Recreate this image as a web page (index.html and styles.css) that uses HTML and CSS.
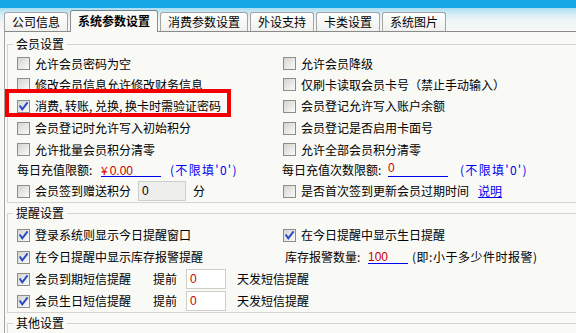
FILE: index.html
```html
<!DOCTYPE html>
<html lang="zh-CN">
<head>
<meta charset="utf-8">
<title>系统参数设置</title>
<link rel="stylesheet" href="styles.css">
</head>
<body>
<div class="topbar"></div>
<div class="tabstrip">
  <div class="tab">公司信息</div>
  <div class="tab active">系统参数设置</div>
  <div class="tab">消费参数设置</div>
  <div class="tab">外设支持</div>
  <div class="tab">卡类设置</div>
  <div class="tab">系统图片</div>
</div>
<div class="panel">
  <fieldset class="group g1">
    <legend>会员设置</legend>
    <div class="grid">
      <div class="cell"><span class="box"></span>允许会员密码为空</div>
      <div class="cell"><span class="box"></span>允许会员降级</div>

      <div class="cell"><span class="box"></span>修改会员信息允许修改财务信息</div>
      <div class="cell"><span class="box"></span>仅刷卡读取会员卡号（禁止手动输入）</div>

      <div class="cell hl"><span class="box"><svg class="tick" viewBox="0 0 11 11"><path d="M2.2 5.2 L4.3 8.3 L9 2.2"/></svg></span><span>消费, 转账, 兑换, 换卡时需验证密码</span></div>
      <div class="cell"><span class="box"></span>会员登记允许写入账户余额</div>

      <div class="cell"><span class="box"></span>会员登记时允许写入初始积分</div>
      <div class="cell"><span class="box"></span>会员登记是否启用卡面号</div>

      <div class="cell"><span class="box"></span>允许批量会员积分清零</div>
      <div class="cell"><span class="box"></span>允许全部会员积分清零</div>

      <div class="cell"><span class="lbl w84">每日充值限额:</span><span class="uline w60"><span class="yen">¥</span>0.00</span><span class="hint ml9">(不限填'0')</span></div>
      <div class="cell shift"><span class="lbl w106">每日充值次数限额:</span><span class="uline w60 raised">0</span><span class="hint ml12">(不限填'0')</span></div>

      <div class="cell"><span class="lbl w121"><span class="box"></span>会员签到赠送积分</span><span class="tbox gray w48">0</span><span class="ml7">分</span></div>
      <div class="cell"><span class="lbl w195"><span class="box"></span>是否首次签到更新会员过期时间</span><span class="link">说明</span></div>
    </div>
  </fieldset>

  <fieldset class="group g2">
    <legend>提醒设置</legend>
    <div class="grid">
      <div class="cell"><span class="box"><svg class="tick" viewBox="0 0 11 11"><path d="M2.2 5.2 L4.3 8.3 L9 2.2"/></svg></span>登录系统则显示今日提醒窗口</div>
      <div class="cell"><span class="box"><svg class="tick" viewBox="0 0 11 11"><path d="M2.2 5.2 L4.3 8.3 L9 2.2"/></svg></span>在今日提醒中显示生日提醒</div>

      <div class="cell"><span class="box"><svg class="tick" viewBox="0 0 11 11"><path d="M2.2 5.2 L4.3 8.3 L9 2.2"/></svg></span>在今日提醒中显示库存报警提醒</div>
      <div class="cell inset"><span class="lbl w83">库存报警数量:</span><span class="uline w40">100</span><span class="ml4 spaced">(即:小于多少件时报警)</span></div>

      <div class="cell span"><span class="lbl w136"><span class="box"><svg class="tick" viewBox="0 0 11 11"><path d="M2.2 5.2 L4.3 8.3 L9 2.2"/></svg></span>会员到期短信提醒</span><span class="lbl w33">提前</span><span class="tbox w40 red">0</span><span class="ml11">天发短信提醒</span></div>

      <div class="cell span"><span class="lbl w136"><span class="box"><svg class="tick" viewBox="0 0 11 11"><path d="M2.2 5.2 L4.3 8.3 L9 2.2"/></svg></span>会员生日短信提醒</span><span class="lbl w33">提前</span><span class="tbox w40 red">0</span><span class="ml11">天发短信提醒</span></div>
    </div>
  </fieldset>

  <fieldset class="group g3">
    <legend>其他设置</legend>
    <div class="filler"></div>
  </fieldset>
</div>
</body>
</html>
```

FILE: styles.css
```css
html, body {
  margin: 0;
  padding: 0;
}
html {
  overflow: hidden;
}
body {
  width: 576px;
  height: 333px;
  overflow: hidden;
  background: #f9f9f6;
  font-family: "Noto Sans CJK SC", "Noto Sans", sans-serif;
  font-size: 12px;
  line-height: 14px;
  color: #000;
}

.topbar {
  height: 8px;
  background: #16a8e6;
}

.tabstrip {
  height: 23px;
  display: flex;
  align-items: flex-end;
  gap: 2px;
  padding-left: 4px;
  background: linear-gradient(#a9dcf1 0px, #d3edf6 6px, #eef5f7 12px, #f7f7f6 23px);
}

.tab {
  height: 18px;
  line-height: 18px;
  padding: 0 7px;
  border: 1px solid #a4a4a2;
  border-bottom: 0;
  border-radius: 3px 3px 0 0;
  background: linear-gradient(#ffffff, #f0f0ee);
  white-space: nowrap;
}

.tab.active {
  height: 21px;
  line-height: 20px;
  margin-bottom: -1px;
  position: relative;
  z-index: 1;
  background: #f9f9f6;
  border-color: #8e8e8c;
  border-top-color: #6f8294;
  font-weight: bold;
}

.panel {
  width: 569px;
  height: 296px;
  margin-left: 4px;
  border-top: 1px solid #8a8a8a;
  border-left: 1px solid #a3a3a3;
  padding: 5px 0 0 2px;
  overflow: hidden;
}

.group {
  margin: 0;
  padding: 2px 0 0 9px;
  border: 1px solid #d4d4d1;
  border-right: 0;
  min-width: 0;
}
.group + .group {
  margin-top: 3px;
}
.group legend {
  padding: 0 3px;
  margin-left: -4px;
  line-height: 14px;
}
.g2 {
  padding-top: 4px;
}
.g3 {
  border-bottom: 0;
}
.filler {
  height: 1px;
}

.grid {
  display: grid;
  grid-template-columns: 266px 1fr;
}
.g1 .grid {
  grid-template-rows: 21px 21px 22px 22px 21px 20px 22px;
}
.g2 .grid {
  grid-template-rows: repeat(4, 22px);
}

.cell {
  display: flex;
  align-items: center;
  white-space: nowrap;
}
.span {
  grid-column: 1 / -1;
}
.shift {
  margin-left: -1px;
}
.inset {
  margin-left: 2px;
}

.box {
  width: 13px;
  height: 13px;
  box-sizing: border-box;
  border: 1px solid #8d8d8a;
  background: linear-gradient(135deg, #d3d3cf 0%, #e9e9e6 55%, #fbfbf9 100%);
  margin-right: 5px;
  flex: none;
  display: flex;
}
.tick {
  width: 11px;
  height: 11px;
}
.tick path {
  fill: none;
  stroke: #2349c6;
  stroke-width: 1.9;
  stroke-linecap: square;
}

.lbl {
  display: flex;
  align-items: center;
  flex: none;
}
.w33 { width: 33px; }
.w40 { width: 40px; }
.w48 { width: 48px; }
.w60 { width: 60px; }
.w83 { width: 83px; }
.w84 { width: 84px; }
.w106 { width: 106px; }
.w121 { width: 121px; }
.w136 { width: 136px; }
.w195 { width: 195px; }
.ml4 { margin-left: 4px; }
.ml7 { margin-left: 7px; }
.ml9 { margin-left: 9px; }
.ml11 { margin-left: 11px; }
.ml12 { margin-left: 12px; }

.uline {
  display: inline-block;
  flex: none;
  height: 12px;
  line-height: 12px;
  border-bottom: 1px solid #0000f0;
  color: #c80000;
  font-family: "Liberation Sans", sans-serif;
}
.uline.raised {
  line-height: 9px;
}
.yen {
  color: #e00000;
  margin-right: 2px;
  font-family: "Noto Sans CJK SC", sans-serif;
}

.hint {
  color: #0000f0;
  letter-spacing: 1.3px;
}
.spaced {
  letter-spacing: 0.5px;
}

.tbox {
  flex: none;
  box-sizing: border-box;
  height: 20px;
  border: 1px solid #cdcdca;
  background: #ffffff;
  padding-left: 3px;
  line-height: 18px;
  font-family: "Liberation Sans", sans-serif;
}
.tbox.gray {
  background: #eeeeec;
}
.tbox.red {
  color: #c80000;
}

.link {
  color: #0000f0;
  text-decoration: underline;
}

.hl {
  position: relative;
}
.hl::after {
  content: "";
  position: absolute;
  left: -12px;
  top: -6px;
  width: 226px;
  height: 28px;
  box-sizing: border-box;
  border: 4px solid #f20000;
}
```
